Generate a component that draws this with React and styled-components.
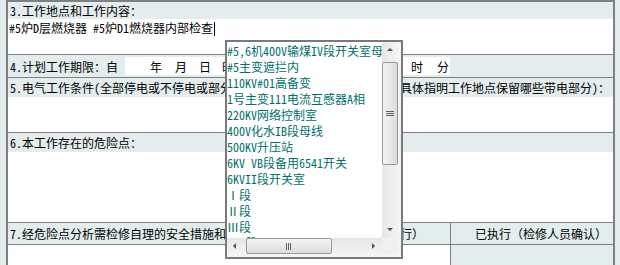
import React from "react";
import styled, { createGlobalStyle } from "styled-components";

const LIGHT = "#e3eded";
const LINE = "#808080";
const TEAL = "#006f6c";

const GlobalStyle = createGlobalStyle`
  html, body { margin: 0; padding: 0; background: ${LIGHT}; }
  body {
    font-family: "Noto Sans Mono CJK SC", "Noto Sans CJK SC", "Liberation Sans", sans-serif;
    font-size: 12px;
    color: #000;
  }
`;

const Page = styled.div`
  position: relative;
  width: 620px;
  height: 265px;
  overflow: hidden;
  padding-left: 6px;
  box-sizing: border-box;
`;

const Form = styled.div`
  width: 609px;
  box-sizing: border-box;
  border-left: 2px solid ${LINE};
  border-right: 2px solid ${LINE};
  border-top: 2px solid ${LINE};
  display: flex;
  flex-direction: column;
`;

const Section = styled.div`
  display: flex;
  flex-direction: column;
  border-bottom: 1px solid ${LINE};
`;

const Header = styled.div`
  height: ${(p) => p.$h || 17}px;
  display: flex;
  align-items: center;
  padding-left: 2px;
  background: ${LIGHT};
  white-space: pre;
  overflow: hidden;
  line-height: 14px;
`;

const Body = styled.div`
  height: ${(p) => p.$h}px;
  background: #fff;
  padding: 2px 1px 0;
  box-sizing: border-box;
  line-height: 14px;
  white-space: pre;
`;

const Caret = styled.span`
  display: inline-block;
  width: 1px;
  height: 14px;
  background: #000;
  vertical-align: -3px;
  margin-left: 1px;
`;

const PeriodRow = styled.div`
  height: 22px;
  display: flex;
  align-items: center;
  padding-left: 2px;
  background: ${LIGHT};
  white-space: nowrap;
  border-bottom: 1px solid ${LINE};
`;

const DateBox = styled.div`
  margin-left: 7px;
  width: 325px;
  height: 18px;
  background: #fff;
  display: flex;
  align-items: center;
`;

const Unit = styled.span`
  margin-left: ${(p) => p.$gap}px;
  width: 12px;
`;

const SplitHeader = styled.div`
  height: 21px;
  display: grid;
  grid-template-columns: 442px 1fr;
  background: ${LIGHT};
  border-bottom: 1px solid ${LINE};
`;

const Cell = styled.div`
  display: flex;
  align-items: center;
  justify-content: ${(p) => (p.$center ? "center" : "flex-start")};
  padding-left: ${(p) => (p.$center ? 18 : 2)}px;
  white-space: pre;
  overflow: hidden;
  border-left: ${(p) => (p.$divider ? `1px solid ${LINE}` : "none")};
  background: ${(p) => (p.$white ? "#fff" : LIGHT)};
`;

const SplitBody = styled.div`
  height: 30px;
  display: grid;
  grid-template-columns: 442px 1fr;
`;

/* ---------- dropdown list box ---------- */

const ListBox = styled.div`
  position: absolute;
  left: 225px;
  top: 40px;
  width: 178px;
  height: 219px;
  box-sizing: border-box;
  border: 2px solid #7a7a7a;
  background: #f4f4f4;
  display: grid;
  grid-template-columns: 155px 16px;
  grid-template-rows: 196px 16px;
`;

const Items = styled.div`
  background: #fff;
  overflow: hidden;
  padding-top: 1px;
`;

const Item = styled.div`
  height: 16px;
  line-height: 16px;
  color: ${TEAL};
  white-space: pre;
  font-size: 12px;
`;

const VScroll = styled.div`
  display: flex;
  flex-direction: column;
  background: linear-gradient(to right, #e6e6e6, #f3f3f3);
`;

const HScroll = styled.div`
  display: flex;
  background: linear-gradient(to bottom, #e6e6e6, #f3f3f3);
`;

const Corner = styled.div`
  background: #f0f0f0;
`;

const ArrowBtn = styled.div`
  width: 16px;
  height: 16px;
  flex: none;
  display: flex;
  align-items: center;
  justify-content: center;
`;

const Track = styled.div`
  flex: 1;
  display: flex;
  flex-direction: ${(p) => (p.$h ? "row" : "column")};
`;

const Thumb = styled.div`
  box-sizing: border-box;
  border: 1px solid #9a9a9a;
  border-radius: 2px;
  background: ${(p) =>
    p.$h
      ? "linear-gradient(to bottom, #f4f4f4, #dcdcdc)"
      : "linear-gradient(to right, #f4f4f4, #dcdcdc)"};
  display: flex;
  align-items: center;
  justify-content: center;
  margin-top: ${(p) => p.$start || 0}px;
  margin-left: ${(p) => p.$hstart || 0}px;
  width: ${(p) => (p.$h ? `${p.$len}px` : "100%")};
  height: ${(p) => (p.$h ? "100%" : `${p.$len}px`)};
`;

const Arrow = ({ dir }) => {
  const pts = {
    up: "1,5 4,2 7,5",
    down: "1,2 4,5 7,2",
    left: "5,1 2,4 5,7",
    right: "2,1 5,4 2,7",
  }[dir];
  return (
    <svg width="8" height="8" viewBox="0 0 8 8">
      <polygon points={pts} fill="#505050" />
    </svg>
  );
};

const Grip = ({ h }) =>
  h ? (
    <svg width="8" height="7" viewBox="0 0 8 7">
      <rect x="1" y="0" width="1" height="7" fill="#606060" />
      <rect x="3" y="0" width="1" height="7" fill="#606060" />
      <rect x="5" y="0" width="1" height="7" fill="#606060" />
    </svg>
  ) : (
    <svg width="8" height="8" viewBox="0 0 8 8">
      <rect x="0" y="1" width="8" height="1" fill="#606060" />
      <rect x="0" y="3" width="8" height="1" fill="#606060" />
      <rect x="0" y="5" width="8" height="1" fill="#606060" />
    </svg>
  );

const places = [
  "#5,6机400V输煤IV段开关室母线",
  "#5主变遮拦内",
  "110KV#01高备变",
  "1号主变111电流互感器A相",
  "220KV网络控制室",
  "400V化水IB段母线",
  "500KV升压站",
  "6KV VB段备用6541开关",
  "6KVII段开关室",
  "Ⅰ段",
  "Ⅱ段",
  "Ⅲ段",
  " Ⅳ段",
  "Ⅴ段",
];

const dateUnits = [
  ["年", 25],
  ["月", 13],
  ["日", 12],
  ["时", 11],
  ["分", 12],
  ["至", 17],
  ["年", 52],
  ["月", 12],
  ["日", 12],
  ["时", 12],
  ["分", 14],
];

export default function App() {
  return (
    <>
      <GlobalStyle />
      <Page>
        <Form>
          <Section>
            <Header>3.工作地点和工作内容：</Header>
            <Body $h={35}>
              #5炉D层燃烧器 #5炉D1燃烧器内部检查
              <Caret />
            </Body>
          </Section>
          <PeriodRow>
            4.计划工作期限：自
            <DateBox>
              {dateUnits.map(([u, g], i) => (
                <Unit key={i} $gap={g}>
                  {u}
                </Unit>
              ))}
            </DateBox>
          </PeriodRow>
          <Section>
            <Header $h={19}>
              5.电气工作条件(全部停电或不停电或部分停电，对于部分停电的工作，应具体指明工作地点保留哪些带电部分)：
            </Header>
            <Body $h={35} />
          </Section>
          <Section>
            <Header $h={19}>6.本工作存在的危险点：</Header>
            <Body $h={70} />
          </Section>
          <SplitHeader>
            <Cell>7.经危险点分析需检修自理的安全措施和注意事项 （由检修工作负责人执行）</Cell>
            <Cell $center $divider>
              已执行（检修人员确认）
            </Cell>
          </SplitHeader>
          <SplitBody>
            <Cell $white />
            <Cell $divider />
          </SplitBody>
        </Form>

        <ListBox>
          <Items>
            {places.map((p, i) => (
              <Item key={i}>{p}</Item>
            ))}
          </Items>
          <VScroll>
            <ArrowBtn>
              <Arrow dir="up" />
            </ArrowBtn>
            <Track>
              <Thumb $len={103} $start={4}>
                <Grip />
              </Thumb>
            </Track>
            <ArrowBtn>
              <Arrow dir="down" />
            </ArrowBtn>
          </VScroll>
          <HScroll>
            <ArrowBtn>
              <Arrow dir="left" />
            </ArrowBtn>
            <Track $h>
              <Thumb $h $len={86} $hstart={3}>
                <Grip h />
              </Thumb>
            </Track>
            <ArrowBtn>
              <Arrow dir="right" />
            </ArrowBtn>
          </HScroll>
          <Corner />
        </ListBox>
      </Page>
    </>
  );
}
